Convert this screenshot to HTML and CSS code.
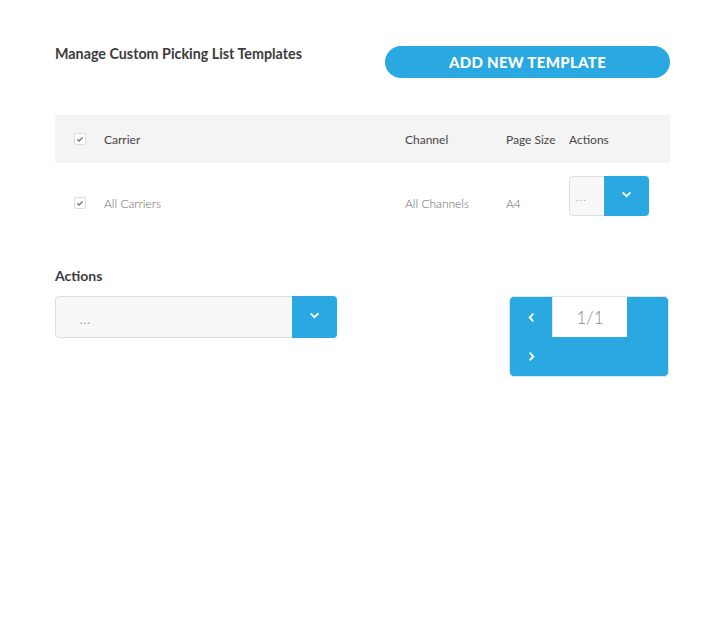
FILE: index.html
```html
<!DOCTYPE html>
<html>
<head>
<meta charset="utf-8">
<link rel="stylesheet" href="styles.css">
</head>
<body>
<div class="page">
  <div class="top">
    <h1 class="title">Manage Custom Picking List Templates</h1>
    <button class="add-btn">ADD NEW TEMPLATE</button>
  </div>

  <div class="table">
    <div class="row head">
      <div class="c-check"><span class="cb"><svg viewBox="0 0 12 12" width="12" height="12"><path d="M3.5 6.3 L5.2 8 L8.6 4.4" fill="none" stroke="#7a6a70" stroke-width="1.3"/></svg></span></div>
      <div class="c-carrier">Carrier</div>
      <div class="c-channel">Channel</div>
      <div class="c-size">Page Size</div>
      <div class="c-actions">Actions</div>
    </div>
    <div class="row body">
      <div class="c-check"><span class="cb"><svg viewBox="0 0 12 12" width="12" height="12"><path d="M3.5 6.3 L5.2 8 L8.6 4.4" fill="none" stroke="#7a6a70" stroke-width="1.3"/></svg></span></div>
      <div class="c-carrier">All Carriers</div>
      <div class="c-channel">All Channels</div>
      <div class="c-size">A4</div>
      <div class="c-actions top-align">
        <div class="select small">
          <span class="sel-val">...</span>
          <span class="sel-btn"><svg viewBox="0 0 12 8" width="11" height="7"><path d="M1.5 1.5 L6 6 L10.5 1.5" fill="none" stroke="#fff" stroke-width="2.2"/></svg></span>
        </div>
      </div>
    </div>
  </div>

  <div class="bottom">
    <div class="actions-block">
      <div class="label">Actions</div>
      <div class="select big">
        <span class="sel-val">...</span>
        <span class="sel-btn"><svg viewBox="0 0 12 8" width="11" height="7"><path d="M1.5 1.5 L6 6 L10.5 1.5" fill="none" stroke="#fff" stroke-width="2.2"/></svg></span>
      </div>
    </div>
    <div class="pager">
      <span class="pg-prev"><svg viewBox="0 0 8 12" width="7" height="11"><path d="M6 1.5 L2 6 L6 10.5" fill="none" stroke="#fff" stroke-width="2.2"/></svg></span>
      <span class="pg-num">1/1</span>
      <span class="pg-next"><svg viewBox="0 0 8 12" width="7" height="11"><path d="M2 1.5 L6 6 L2 10.5" fill="none" stroke="#fff" stroke-width="2.2"/></svg></span>
    </div>
  </div>
</div>
</body>
</html>
```

FILE: styles.css
```css
* { box-sizing: border-box; }
html, body { margin: 0; padding: 0; background: #fff; }
body { font-family: "Lato", "Open Sans", sans-serif; color: #444; }
.page { width: 728px; padding: 46px 58px 0 55px; }

.top { display: flex; justify-content: space-between; align-items: flex-start; }
.title { margin: 0; font-size: 14.3px; font-weight: 700; color: #3e3a3b; line-height: 16px; letter-spacing: 0; }
.add-btn {
  width: 285px; height: 32px; border: none; border-radius: 16px;
  background: #29a8e2; color: #fff; font-family: inherit; font-weight: 900;
  font-size: 15px; letter-spacing: 0.3px; padding: 0; cursor: pointer;
}

.table { margin-top: 37px; width: 615px; }
.row { display: flex; align-items: center; font-size: 12px; }
.row.head { height: 48px; background: #f4f4f4; color: #4a4547; }
.row.body { height: 80px; color: #6a6668; font-weight: 300; }
.c-check { width: 49px; padding-left: 19px; display: flex; }
.cb { width: 12px; height: 12px; border: 1px solid #dcdcdc; border-radius: 2px; background: #fff; display: flex; align-items: center; justify-content: center; }
.cb svg { display: block; margin: -1px; }
.c-carrier { width: 301px; }
.c-channel { width: 101px; }
.c-size { width: 63px; }
.c-actions { flex: 1; }
.c-actions.top-align { align-self: flex-start; padding-top: 13px; }

.select { display: flex; border-radius: 4px; overflow: hidden; }
.sel-val { flex: 1; background: #f8f8f8; border: 1px solid #dedede; border-right: none; border-radius: 4px 0 0 4px; color: #888; display: flex; align-items: center; letter-spacing: 1px; }
.sel-btn { background: #29a8e2; display: flex; align-items: center; justify-content: center; }
.select.small { width: 80px; height: 40px; }
.select.small .sel-val { padding-left: 6px; font-size: 11px; }
.select.small .sel-btn { width: 45px; }
.select.small .sel-btn svg { margin-top: -4px; }

.bottom { display: flex; justify-content: space-between; align-items: flex-start; margin-top: 25px; }
.label { font-size: 14px; font-weight: 700; color: #3e3a3b; line-height: 16px; margin-bottom: 12px; }
.select.big { width: 282px; height: 42px; }
.select.big .sel-val { padding-left: 24px; padding-top: 4px; font-size: 11px; }
.select.big .sel-btn { width: 45px; }
.select.big .sel-btn svg { margin-top: -3px; }

.pager {
  margin-top: 28px; margin-right: 1px; width: 160px; height: 81px; background: #29a8e2;
  border: 1px solid #d8e8f0; border-radius: 5px;
  display: grid; grid-template-columns: 42px 75px 1fr; grid-template-rows: 40px 1fr;
}
.pg-prev, .pg-next { display: flex; align-items: center; justify-content: center; }
.pg-prev { grid-column: 1; grid-row: 1; }
.pg-next { grid-column: 1; grid-row: 2; }
.pg-num { grid-column: 2; grid-row: 1; background: #fff; color: #8a8488; font-size: 17px; font-weight: 300; display: flex; align-items: center; justify-content: center; border-left: 1px solid #e6e6e6; }
```
